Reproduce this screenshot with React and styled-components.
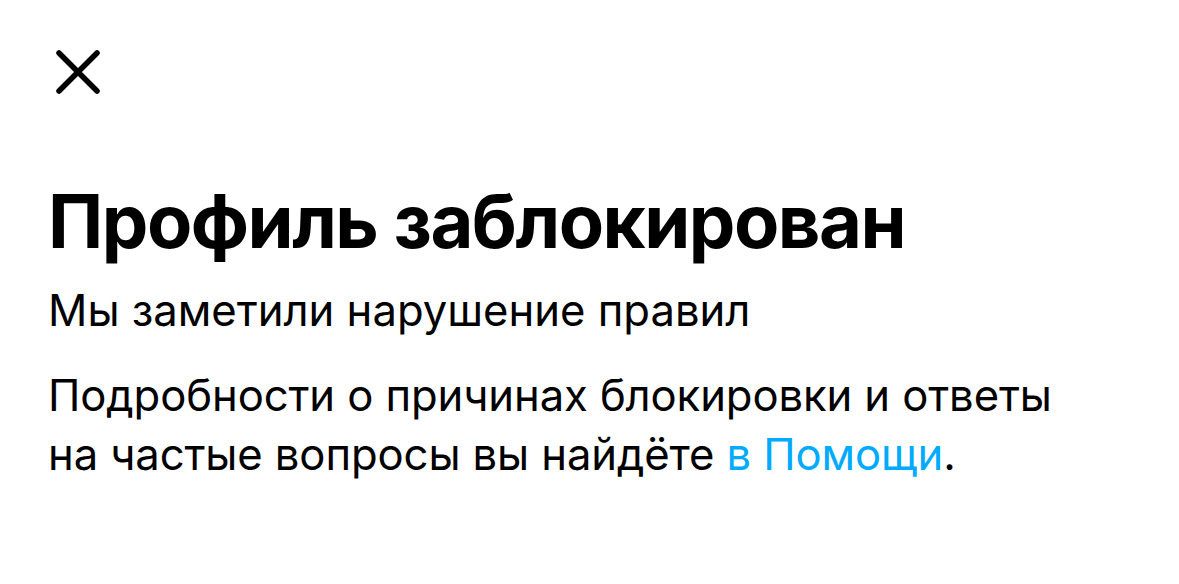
import styled, { createGlobalStyle } from "styled-components";

const GlobalStyle = createGlobalStyle`
  html, body {
    margin: 0;
    padding: 0;
    background: #fff;
  }
  body {
    font-family: Inter, "Noto Sans", sans-serif;
    color: #000;
  }
`;

const Screen = styled.div`
  display: flex;
  flex-direction: column;
  align-items: flex-start;
  padding: 50px 48px 0 48px;
`;

const CloseButton = styled.button`
  display: flex;
  align-items: center;
  justify-content: center;
  width: 44px;
  height: 44px;
  padding: 0;
  margin-left: 8px;
  border: none;
  background: none;
  cursor: pointer;
`;

const Title = styled.h1`
  margin: 87px 0 0 0;
  font-size: 74px;
  font-weight: 700;
  line-height: 80px;
  letter-spacing: -1.5px;
`;

const Subtitle = styled.p`
  margin: 24px 0 0 0;
  font-size: 43.6px;
  line-height: 52px;
`;

const Text = styled.p`
  margin: 29px 0 0 0;
  font-size: 43.6px;
  line-height: 59px;
  letter-spacing: -0.1px;
`;

const HelpLink = styled.a`
  color: #00aaff;
  text-decoration: none;
`;

const CrossIcon = () => (
  <svg width="44" height="44" viewBox="0 0 44 44" fill="none">
    <path
      d="M3 3 L41 41 M41 3 L3 41"
      stroke="#000"
      strokeWidth="5.5"
      strokeLinecap="round"
    />
  </svg>
);

export default function App() {
  return (
    <>
      <GlobalStyle />
      <Screen>
        <CloseButton type="button" aria-label="Закрыть">
          <CrossIcon />
        </CloseButton>
        <Title>Профиль заблокирован</Title>
        <Subtitle>Мы заметили нарушение правил</Subtitle>
        <Text>
          Подробности о причинах блокировки и ответы
          <br />
          на частые вопросы вы найдёте <HelpLink href="#">в Помощи</HelpLink>.
        </Text>
      </Screen>
    </>
  );
}
